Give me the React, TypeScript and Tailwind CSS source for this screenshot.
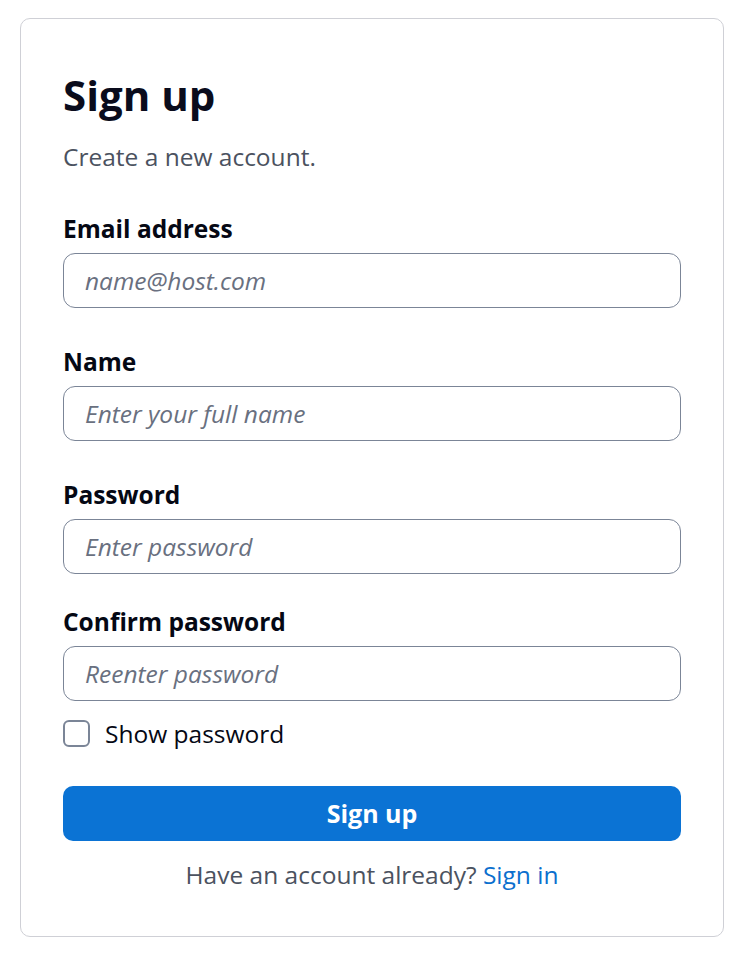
import { useState } from "react";

const fields = [
  { id: "email", label: "Email address", type: "email", placeholder: "name@host.com", gap: "mt-[39px]" },
  { id: "name", label: "Name", type: "text", placeholder: "Enter your full name", gap: "mt-[37px]" },
  { id: "password", label: "Password", type: "password", placeholder: "Enter password", gap: "mt-[37px]" },
  { id: "confirm", label: "Confirm password", type: "password", placeholder: "Reenter password", gap: "mt-[31px]" },
];

export default function App() {
  const [show, setShow] = useState(false);

  return (
    <div className="min-h-screen bg-white pl-5 pt-[18px] pb-6 font-['Open_Sans',sans-serif]">
      <div className="w-[704px] rounded-[10px] border border-[#cfd0d6] px-[42px] pt-[52px] pb-[45px]">
        <h1 className="text-[42px] font-bold leading-[48px] text-[#0a0c1c]">Sign up</h1>
        <p className="mt-[21px] text-[24.5px] leading-[33px] text-[#4b5260]">Create a new account.</p>

        <form onSubmit={(e) => e.preventDefault()}>
          {fields.map((f) => (
            <div key={f.id} className={f.gap}>
              <label htmlFor={f.id} className="block text-[24.5px] font-bold leading-[33px] text-[#050814]">
                {f.label}
              </label>
              <input
                id={f.id}
                type={f.type === "password" && show ? "text" : f.type}
                placeholder={f.placeholder}
                className="mt-2 block h-[55px] w-full rounded-xl border border-[#7b8597] bg-white px-[21px] text-[24.5px] text-[#1f2937] placeholder:italic placeholder:text-[#697080] focus:outline-none"
              />
            </div>
          ))}

          <label className="mt-4 flex items-center gap-[15px] text-[24.5px] leading-[33px] text-[#050814]">
            <input
              type="checkbox"
              checked={show}
              onChange={(e) => setShow(e.target.checked)}
              className="h-[27px] w-[27px] appearance-none rounded-[6px] border-2 border-[#7b8597] bg-white checked:bg-[#0b72d4]"
            />
            Show password
          </label>

          <button
            type="submit"
            className="mt-9 h-[55px] w-full rounded-[10px] bg-[#0b73d4] text-[25px] font-bold text-white"
          >
            Sign up
          </button>
        </form>

        <p className="mt-[17px] text-center text-[24.5px] leading-[33px] text-[#4b5260]">
          Have an account already?{" "}
          <a href="#" className="text-[#0b6fce]">
            Sign in
          </a>
        </p>
      </div>
    </div>
  );
}
